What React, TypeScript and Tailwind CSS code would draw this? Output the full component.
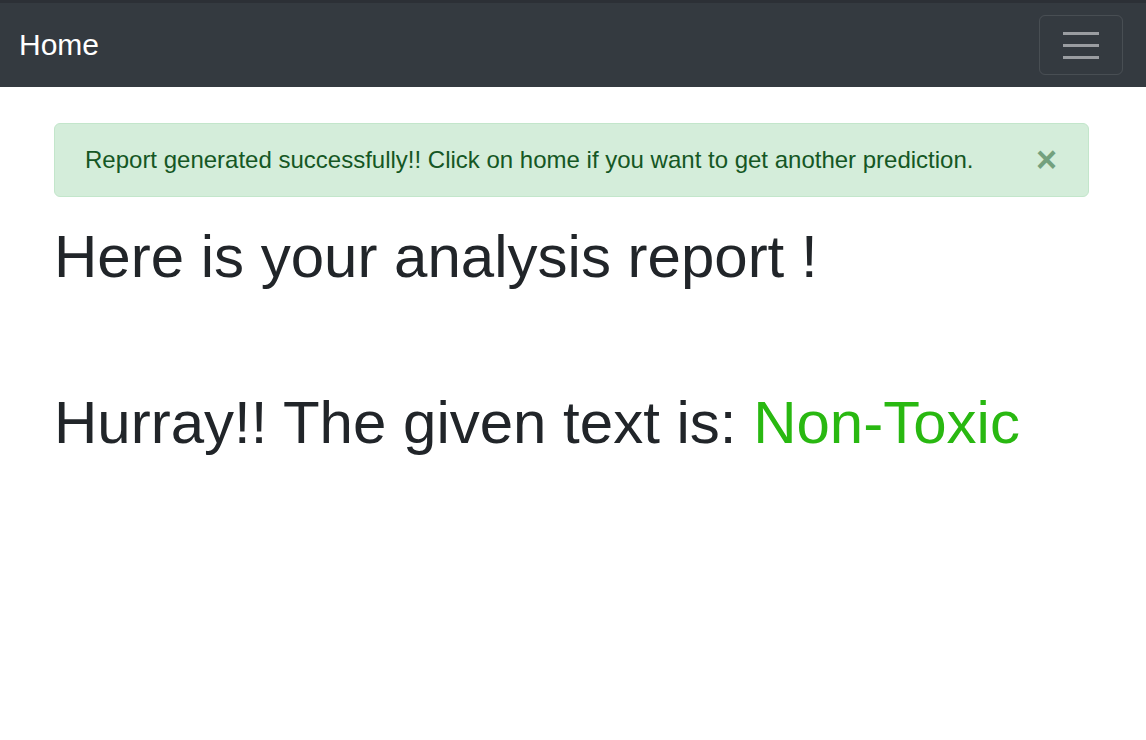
const App = () => {
  return (
    <div className="min-h-[740px] bg-white" style={{ fontFamily: '"Liberation Sans", Arial, sans-serif' }}>
      <nav className="flex h-[87px] items-center justify-between border-t-[3px] border-[#2c3036] bg-[#343a40] pl-[19px] pr-[23px]">
        <a className="mb-[2px] text-[30px] leading-[45px] text-white">Home</a>
        <button className="flex h-[60px] w-[84px] flex-col items-center justify-center gap-[9px] rounded-[6px] border border-white/10">
          <span className="block h-[3px] w-[36px] bg-[#9a9da1]" />
          <span className="block h-[3px] w-[36px] bg-[#9a9da1]" />
          <span className="block h-[3px] w-[36px] bg-[#9a9da1]" />
        </button>
      </nav>
      <div className="ml-[54px] w-[1035px]">
        <div className="mt-[36px] flex items-center justify-between rounded-[6px] border border-[#c3e6cb] bg-[#d4edda] py-[18px] pl-[30px] pr-[31px] text-[24px] leading-[36px] text-[#155724]">
          <span>Report generated successfully!! Click on home if you want to get another prediction.</span>
          <span className="text-[36px] font-bold leading-[36px] opacity-50">×</span>
        </div>
        <h1 className="mt-[24px] text-[60px] leading-[72px] text-[#212529]">Here is your analysis report !</h1>
        <h1 className="mt-[94px] text-[60px] leading-[72px] text-[#212529]">
          Hurray!! The given text is: <span className="text-[#29b811]">Non-Toxic</span>
        </h1>
      </div>
    </div>
  );
};

export default App;
